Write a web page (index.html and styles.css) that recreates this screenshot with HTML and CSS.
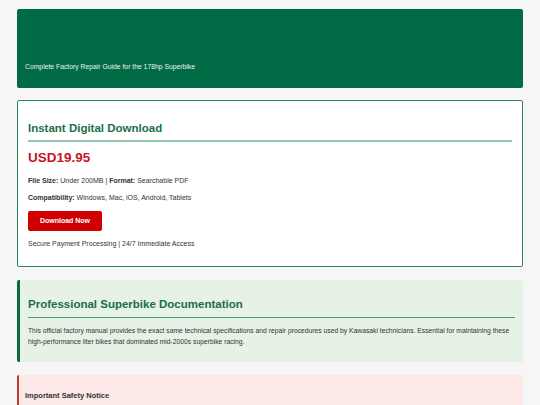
FILE: index.html
```html
<!DOCTYPE html>
<html>
<head>
<meta charset="utf-8">
<link rel="stylesheet" href="styles.css">
</head>
<body>
<div class="page">
  <header class="hero">
    <p class="hero-sub">Complete Factory Repair Guide for the 178hp Superbike</p>
  </header>

  <section class="buy-card">
    <h2 class="card-title">Instant Digital Download</h2>
    <div class="price">USD19.95</div>
    <p class="meta"><strong>File Size:</strong> Under 200MB | <strong>Format:</strong> Searchable PDF</p>
    <p class="meta meta-2"><strong>Compatibility:</strong> Windows, Mac, iOS, Android, Tablets</p>
    <a class="btn" href="#">Download Now</a>
    <p class="secure">Secure Payment Processing | 24/7 Immediate Access</p>
  </section>

  <section class="info">
    <h2 class="info-title">Professional Superbike Documentation</h2>
    <p class="info-text">This official factory manual provides the exact same technical specifications and repair procedures used by Kawasaki technicians. Essential for maintaining these high-performance liter bikes that dominated mid-2000s superbike racing.</p>
  </section>

  <section class="notice">
    <h3 class="notice-title">Important Safety Notice</h3>
  </section>
</div>
</body>
</html>
```

FILE: styles.css
```css
* { box-sizing: border-box; }
html, body {
  margin: 0;
  padding: 0;
  background: #f6f6f6;
}
body {
  font-family: "Liberation Sans", Arial, sans-serif;
  color: #333;
}
.page {
  padding: 9px 17px 0;
  display: flex;
  flex-direction: column;
  gap: 12px;
}
.hero {
  background: #006b45;
  border-radius: 2px;
  height: 79px;
  padding: 0 8px 16px;
  display: flex;
  align-items: flex-end;
}
.hero-sub {
  margin: 0;
  color: #e8f3ee;
  font-size: 6.8px;
  line-height: 10px;
}
.buy-card {
  background: #fff;
  border: 1px solid #2f8562;
  border-radius: 2px;
  padding: 20px 10px 0;
  height: 167px;
}
.card-title {
  margin: 0;
  color: #1a7048;
  font-size: 11.5px;
  line-height: 14px;
  padding-bottom: 5px;
  border-bottom: 2px solid #92c9b2;
}
.price {
  margin-top: 8px;
  color: #c8141e;
  font-weight: bold;
  font-size: 13.5px;
  line-height: 16px;
}
.meta {
  margin: 8.5px 0 0;
  font-size: 7px;
  line-height: 11px;
  color: #333;
}
.meta-2 { margin-top: 6px; }
.btn {
  display: inline-block;
  margin-top: 8.5px;
  width: 74px;
  height: 20px;
  line-height: 20px;
  text-align: center;
  background: #d00000;
  color: #fff;
  font-weight: bold;
  font-size: 7px;
  text-decoration: none;
  border-radius: 2px;
}
.secure {
  margin: 6.5px 0 0;
  font-size: 7px;
  line-height: 11px;
  color: #333;
}
.info {
  margin-top: 1px;
  background: #e6f2e6;
  border-left: 3px solid #0b6a44;
  border-radius: 2px;
  padding: 17px 8px 0 8px;
  height: 82px;
}
.info-title {
  margin: 0;
  color: #1a7048;
  font-size: 11.5px;
  line-height: 14px;
  padding-bottom: 6px;
  border-bottom: 1.5px solid #4d9a78;
}
.info-text {
  margin: 7px 0 0;
  font-size: 6.75px;
  line-height: 11px;
  color: #333;
}
.notice {
  margin-top: 1px;
  background: #fde8e8;
  border-left: 2px solid #c0392b;
  border-radius: 2px;
  padding: 16px 6px 10px;
  height: 40px;
}
.notice-title {
  margin: 0;
  font-size: 7.5px;
  line-height: 10px;
  color: #333;
}
```
